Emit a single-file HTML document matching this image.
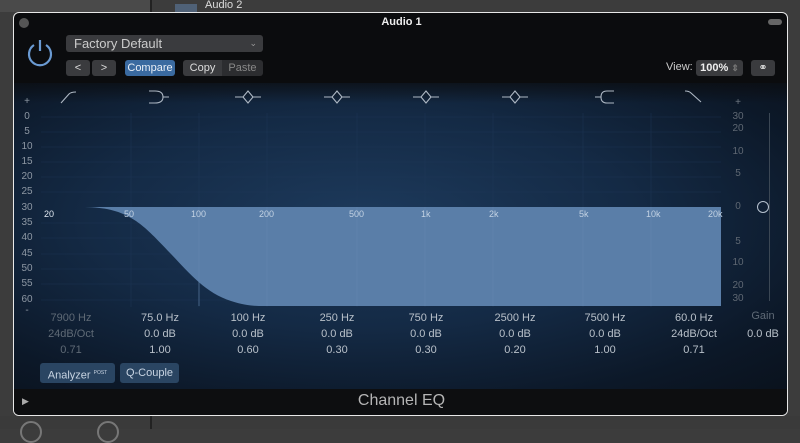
<!DOCTYPE html>
<html><head><style>
*{margin:0;padding:0;box-sizing:border-box}
body{width:800px;height:429px;overflow:hidden;background:#3c3c3c;font-family:"Liberation Sans",sans-serif;position:relative}
.a{position:absolute}
.t{position:absolute;white-space:nowrap}
.win{left:13px;top:12px;width:775px;height:404px;border:1.5px solid #e8e8e8;border-radius:6px;background:#0b0c0e;overflow:hidden}
.btn{position:absolute;background:#3a3b3e;border-radius:3px;color:#ddd;font-size:11px;text-align:center;line-height:16px}
.dl{font-size:10px;color:#8d97a3;width:20px;text-align:center}
.fl{font-size:9px;color:#c3d2e3}
.v{font-size:11px;color:#b8c0c9;width:80px;text-align:center}
</style></head><body>
<div class="a" style="left:0;top:0;width:150px;height:12px;background:#4a4a4a"></div>
<div class="t" style="left:205px;top:0;font-size:11px;color:#ddd;line-height:11px">Audio 2</div>
<div class="a" style="left:175px;top:4px;width:22px;height:8px;background:#4f6177"></div>
<div class="a" style="left:150px;top:0;width:2px;height:12px;background:#222"></div>
<div class="a" style="left:0;top:416px;width:800px;height:13px;background:#3a3a3a"></div>
<div class="a" style="left:150px;top:416px;width:2px;height:13px;background:#222"></div>
<div class="a" style="left:20px;top:421px;width:22px;height:22px;border-radius:50%;border:2px solid #777"></div>
<div class="a" style="left:97px;top:421px;width:22px;height:22px;border-radius:50%;border:2px solid #777"></div>

<div class="a win">
 <div class="a" style="left:0;top:70px;width:775px;height:306px;background:radial-gradient(ellipse at 45% 45%,#1d3a5c 0%,#142a45 45%,#0c1828 80%,#0a121d 100%)"></div>
 <div class="a" style="left:0;top:60px;width:775px;height:30px;background:linear-gradient(#0b0c0e,rgba(11,12,14,0))"></div>
 <div class="a" style="left:0;top:376px;width:775px;height:28px;background:#0d0e10"></div>
 <div class="t" style="left:0;width:775px;text-align:center;top:379px;font-size:16px;color:#b5b5b5">Channel EQ</div>
 <div class="t" style="left:8px;top:383px;font-size:9px;color:#aaa">▶</div>
 <div class="a" style="left:5px;top:5px;width:10px;height:10px;border-radius:50%;background:#555"></div>
 <div class="t" style="left:0;width:775px;text-align:center;top:3px;font-size:11px;color:#eee;font-weight:bold">Audio 1</div>
 <div class="a" style="left:754px;top:6px;width:14px;height:6px;border-radius:3px;background:#666"></div>
 <svg class="a" style="left:11px;top:24px" width="30" height="30" viewBox="0 0 30 30"><path d="M9 8 A11 11 0 1 0 21 8" fill="none" stroke="#6a9ad2" stroke-width="2.2"/><line x1="15" y1="3" x2="15" y2="14" stroke="#6a9ad2" stroke-width="2.2"/></svg>
 <div class="btn" style="left:52px;top:22px;width:197px;height:17px;text-align:left;padding-left:8px;font-size:13px;line-height:17px;color:#ccc">Factory Default<span style="position:absolute;right:6px;font-size:9px;color:#999">⌄</span></div>
 <div class="btn" style="left:52px;top:47px;width:24px">&lt;</div>
 <div class="btn" style="left:78px;top:47px;width:24px">&gt;</div>
 <div class="btn" style="left:111px;top:47px;width:50px;background:#3a6aa0;color:#e8eef6">Compare</div>
 <div class="btn" style="left:169px;top:47px;width:39px;border-radius:3px 0 0 3px">Copy</div>
 <div class="btn" style="left:208px;top:47px;width:41px;border-radius:0 3px 3px 0;background:#2c2d30;color:#888">Paste</div>
 <div class="t" style="left:652px;top:48px;font-size:11px;color:#ccc">View:</div>
 <div class="btn" style="left:682px;top:47px;width:47px;font-weight:bold;color:#eee">100% <span style="color:#777;font-size:9px">⇕</span></div>
 <div class="btn" style="left:737px;top:47px;width:24px;color:#ddd">⚭</div>

 <svg class="a" style="left:0;top:75px" width="775" height="20" stroke="#aeb8c4" stroke-width="1.1" fill="none">
  <path d="M47 15 L55 6 Q57 4 62 4"/>
  <path d="M135 3 L141 3 Q149 3 149 9 Q149 15 141 15 L135 15 M149 9 L155 9"/>
  <path d="M221 9 L229 9 L234 3 L239 9 L234 15 L229 9 M239 9 L247 9"/>
  <path d="M310 9 L318 9 L323 3 L328 9 L323 15 L318 9 M328 9 L336 9"/>
  <path d="M399 9 L407 9 L412 3 L417 9 L412 15 L407 9 M417 9 L425 9"/>
  <path d="M488 9 L496 9 L501 3 L506 9 L501 15 L496 9 M506 9 L514 9"/>
  <path d="M581 9 L587 9 Q587 3 593 3 L600 3 M587 9 Q587 15 593 15 L600 15"/>
  <path d="M671 3 Q675 3 677 5 L687 14"/>
 </svg>
 <svg class="a" style="left:27px;top:100px" width="680" height="194">
  <g stroke="#21395a" stroke-width="0.6" opacity="0.7">
   <line x1="0" y1="4" x2="680" y2="4"/><line x1="0" y1="19" x2="680" y2="19"/><line x1="0" y1="34" x2="680" y2="34"/><line x1="0" y1="49" x2="680" y2="49"/><line x1="0" y1="64" x2="680" y2="64"/><line x1="0" y1="79" x2="680" y2="79"/>
   <line x1="0" y1="110" x2="680" y2="110"/><line x1="0" y1="125" x2="680" y2="125"/><line x1="0" y1="141" x2="680" y2="141"/><line x1="0" y1="156" x2="680" y2="156"/><line x1="0" y1="171" x2="680" y2="171"/><line x1="0" y1="187" x2="680" y2="187"/>
   <line x1="90" y1="0" x2="90" y2="194"/><line x1="158" y1="0" x2="158" y2="194"/><line x1="226" y1="0" x2="226" y2="194"/><line x1="316" y1="0" x2="316" y2="194"/><line x1="384" y1="0" x2="384" y2="194"/><line x1="452" y1="0" x2="452" y2="194"/><line x1="542" y1="0" x2="542" y2="194"/><line x1="610" y1="0" x2="610" y2="194"/>
  </g>
  <path d="M0 94 L40 94 C65 94 80 98 95 108 C105 115 112 122 130 141 C150 162 165 180 190 188 C205 193 215 193 222 193 L680 193 L680 94 Z" fill="#5a7ea8"/>
  <g stroke="#6487af" stroke-width="0.6"><line x1="158" y1="94" x2="158" y2="193"/><line x1="226" y1="94" x2="226" y2="193"/><line x1="316" y1="94" x2="316" y2="193"/><line x1="384" y1="94" x2="384" y2="193"/><line x1="452" y1="94" x2="452" y2="193"/><line x1="542" y1="94" x2="542" y2="193"/><line x1="610" y1="94" x2="610" y2="193"/></g>
 </svg>
 <div class="t fl" style="left:30px;top:196px;color:#e0e8f0">20</div>
 <div class="t fl" style="left:110px;top:196px">50</div>
 <div class="t fl" style="left:177px;top:196px">100</div>
 <div class="t fl" style="left:245px;top:196px">200</div>
 <div class="t fl" style="left:335px;top:196px">500</div>
 <div class="t fl" style="left:407px;top:196px">1k</div>
 <div class="t fl" style="left:475px;top:196px">2k</div>
 <div class="t fl" style="left:565px;top:196px">5k</div>
 <div class="t fl" style="left:632px;top:196px">10k</div>
 <div class="t fl" style="left:694px;top:196px">20k</div>
 <div class="t dl" style="left:3px;top:83px">+</div>
 <div class="t dl" style="left:3px;top:98px">0</div><div class="t dl" style="left:3px;top:113px">5</div><div class="t dl" style="left:3px;top:128px">10</div><div class="t dl" style="left:3px;top:143px">15</div><div class="t dl" style="left:3px;top:158px">20</div><div class="t dl" style="left:3px;top:173px">25</div><div class="t dl" style="left:3px;top:189px">30</div><div class="t dl" style="left:3px;top:204px">35</div><div class="t dl" style="left:3px;top:219px">40</div><div class="t dl" style="left:3px;top:235px">45</div><div class="t dl" style="left:3px;top:250px">50</div><div class="t dl" style="left:3px;top:265px">55</div><div class="t dl" style="left:3px;top:281px">60</div><div class="t dl" style="left:3px;top:292px">-</div>
 <div class="t dl" style="left:714px;top:84px;color:#6f7883">+</div>
 <div class="t dl" style="left:714px;top:98px;color:#5e6772">30</div><div class="t dl" style="left:714px;top:110px;color:#5e6772">20</div><div class="t dl" style="left:714px;top:133px;color:#5e6772">10</div><div class="t dl" style="left:714px;top:155px;color:#5e6772">5</div><div class="t dl" style="left:714px;top:188px;color:#5e6772">0</div><div class="t dl" style="left:714px;top:223px;color:#5e6772">5</div><div class="t dl" style="left:714px;top:244px;color:#5e6772">10</div><div class="t dl" style="left:714px;top:267px;color:#5e6772">20</div><div class="t dl" style="left:714px;top:280px;color:#5e6772">30</div>
 <div class="a" style="left:755px;top:100px;width:1px;height:188px;background:#3b4754"></div>
 <div class="a" style="left:743px;top:188px;width:12px;height:12px;border-radius:50%;border:1.5px solid #b7c2cf"></div>
 <div class="t v" style="left:17px;top:299px;color:#5f6a76">7900 Hz</div><div class="t v" style="left:17px;top:315px;color:#5f6a76">24dB/Oct</div><div class="t v" style="left:17px;top:331px;color:#5f6a76">0.71</div>
 <div class="t v" style="left:106px;top:299px">75.0 Hz</div><div class="t v" style="left:106px;top:315px">0.0 dB</div><div class="t v" style="left:106px;top:331px">1.00</div>
 <div class="t v" style="left:194px;top:299px">100 Hz</div><div class="t v" style="left:194px;top:315px">0.0 dB</div><div class="t v" style="left:194px;top:331px">0.60</div>
 <div class="t v" style="left:283px;top:299px">250 Hz</div><div class="t v" style="left:283px;top:315px">0.0 dB</div><div class="t v" style="left:283px;top:331px">0.30</div>
 <div class="t v" style="left:372px;top:299px">750 Hz</div><div class="t v" style="left:372px;top:315px">0.0 dB</div><div class="t v" style="left:372px;top:331px">0.30</div>
 <div class="t v" style="left:461px;top:299px">2500 Hz</div><div class="t v" style="left:461px;top:315px">0.0 dB</div><div class="t v" style="left:461px;top:331px">0.20</div>
 <div class="t v" style="left:551px;top:299px">7500 Hz</div><div class="t v" style="left:551px;top:315px">0.0 dB</div><div class="t v" style="left:551px;top:331px">1.00</div>
 <div class="t v" style="left:640px;top:299px">60.0 Hz</div><div class="t v" style="left:640px;top:315px">24dB/Oct</div><div class="t v" style="left:640px;top:331px">0.71</div>
 <div class="t v" style="left:709px;top:297px;color:#5f6a76">Gain</div><div class="t v" style="left:709px;top:315px">0.0 dB</div>
 <div class="btn" style="left:26px;top:350px;width:75px;height:20px;line-height:20px;background:#2a4562;color:#c8d4e2">Analyzer <sup style="font-size:5px">POST</sup></div>
 <div class="btn" style="left:106px;top:350px;width:59px;height:20px;line-height:20px;background:#2a4562;color:#c8d4e2">Q-Couple</div>
</div>
</body></html>
